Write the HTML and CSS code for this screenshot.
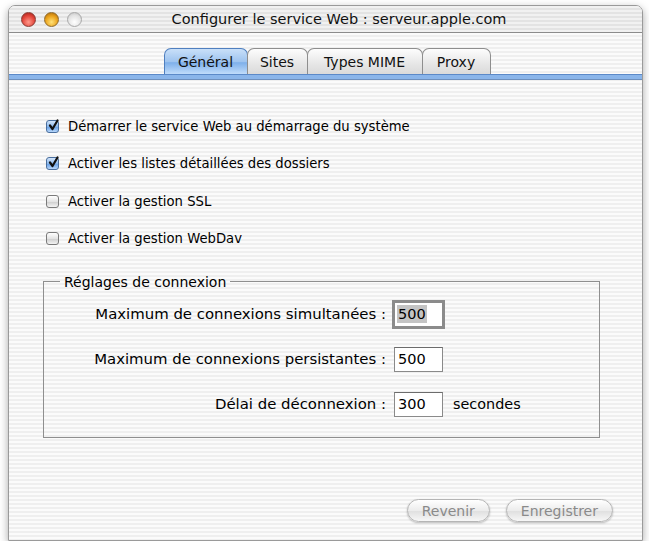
FILE: index.html
```html
<!DOCTYPE html>
<html lang="fr">
<head>
    <meta charset="UTF-8">
    <meta name="viewport" content="width=device-width, initial-scale=1.0">
    <title>Configurer le service Web</title>
    <link rel="stylesheet" href="styles.css">
</head>
<body>
    <div class="window">
        <div class="titlebar">
            <div class="lights">
                <span class="light red"></span>
                <span class="light yellow"></span>
                <span class="light off"></span>
            </div>
            <div class="title">Configurer le service Web : serveur.apple.com</div>
        </div>

        <div class="content">
            <div class="tabs">
                <span class="tab tab-general active">Général</span>
                <span class="tab tab-sites">Sites</span>
                <span class="tab tab-mime">Types MIME</span>
                <span class="tab tab-proxy">Proxy</span>
            </div>
            <div class="tab-band"></div>

            <div class="options">
                <label class="option">
                    <span class="check checked">
                        <svg width="13" height="13" viewBox="0 0 13 13"><path d="M3 6.5 L5.5 10 L10.5 1.5" fill="none" stroke="#111" stroke-width="2.2" stroke-linecap="round" stroke-linejoin="round"/></svg>
                    </span>
                    Démarrer le service Web au démarrage du système
                </label>
                <label class="option">
                    <span class="check checked">
                        <svg width="13" height="13" viewBox="0 0 13 13"><path d="M3 6.5 L5.5 10 L10.5 1.5" fill="none" stroke="#111" stroke-width="2.2" stroke-linecap="round" stroke-linejoin="round"/></svg>
                    </span>
                    Activer les listes détaillées des dossiers
                </label>
                <label class="option">
                    <span class="check"></span>
                    Activer la gestion SSL
                </label>
                <label class="option">
                    <span class="check"></span>
                    Activer la gestion WebDav
                </label>
            </div>

            <fieldset class="group">
                <legend>Réglages de connexion</legend>
                <div class="fields">
                    <span class="field-label">Maximum de connexions simultanées :</span>
                    <span class="field focused"><span class="selected">500</span></span>
                    <span></span>

                    <span class="field-label">Maximum de connexions persistantes :</span>
                    <span class="field">500</span>
                    <span></span>

                    <span class="field-label">Délai de déconnexion :</span>
                    <span class="field">300</span>
                    <span class="unit">secondes</span>
                </div>
            </fieldset>

            <div class="buttons">
                <button class="btn" disabled>Revenir</button>
                <button class="btn" disabled>Enregistrer</button>
            </div>
        </div>
    </div>
</body>
</html>
```

FILE: styles.css
```css
body {
    margin: 0;
    background: #ffffff;
    font-family: "DejaVu Sans", Verdana, sans-serif;
    font-size: 13px;
    color: #000;
}
.window {
    margin: 5px 0 0 8px;
    width: 635px;
    height: 536px;
    display: flex;
    flex-direction: column;
    border: 1px solid #9a9a9a;
    border-radius: 7px 7px 0 0;
    box-shadow: 0 3px 8px rgba(0, 0, 0, 0.35);
    box-sizing: border-box;
    overflow: hidden;
}
.titlebar {
    height: 26px;
    display: flex;
    align-items: center;
    padding-left: 12px;
    border-bottom: 1px solid #8c8c8c;
    background: repeating-linear-gradient(to bottom, #f1f1f1 0 2px, #e3e3e3 2px 4px);
    flex-shrink: 0;
}
.lights {
    display: flex;
    gap: 8px;
}
.light {
    width: 15px;
    height: 15px;
    border-radius: 50%;
    box-sizing: border-box;
}
.light.red {
    background: radial-gradient(circle at 50% 70%, #ff9a8c 0, #e2453a 55%, #9c1d16 100%);
    border: 1px solid #8a3a33;
}
.light.yellow {
    background: radial-gradient(circle at 50% 70%, #ffe27a 0, #eaa21a 55%, #a4620c 100%);
    border: 1px solid #8e6a2a;
}
.light.off {
    background: radial-gradient(circle at 50% 70%, #ffffff 0, #e2e2e2 60%, #bcbcbc 100%);
    border: 1px solid #a8a8a8;
}
.title {
    flex: 1;
    text-align: center;
    padding-right: 46px;
    font-size: 14.5px;
    color: #111;
}
.content {
    flex: 1;
    display: flex;
    flex-direction: column;
    background: repeating-linear-gradient(to bottom, #fbfbfb 0 2px, #efefef 2px 4px);
}
.tabs {
    display: flex;
    justify-content: center;
    margin-top: 15px;
    padding-left: 2px;
}
.tab {
    height: 26px;
    line-height: 27px;
    text-align: center;
    font-size: 14px;
    box-sizing: border-box;
    border: 1px solid #8e8e8e;
    border-bottom: none;
    border-radius: 7px 7px 0 0;
    background: linear-gradient(to bottom, #fdfdfd, #e6e6e6 60%, #dadada);
    color: #111;
    margin-right: -1px;
}
.tab-general { width: 84px; }
.tab-sites { width: 61px; }
.tab-mime { width: 116px; }
.tab-proxy { width: 69px; }
.tab.active {
    background: linear-gradient(to bottom, #c9e0f9, #9fc4ef 50%, #7fb0ea 55%, #c0dcfb);
    border-color: #4f7fbf;
}
.tab-band {
    height: 4px;
    background: #8ab5ea;
    border-top: 1px solid #5b89c8;
    border-bottom: 1px solid #6d8fbd;
}
.options {
    display: flex;
    flex-direction: column;
    gap: 17.5px;
    padding: 36px 0 0 37px;
}
.option {
    display: flex;
    align-items: center;
    gap: 9px;
    height: 20px;
    font-size: 13.2px;
}
.check {
    width: 13px;
    height: 13px;
    box-sizing: border-box;
    border: 1px solid #7a7a7a;
    border-radius: 3px;
    background: linear-gradient(to bottom, #ffffff, #e4e4e4 50%, #cfcfcf 55%, #f4f4f4);
    position: relative;
}
.check.checked {
    background: linear-gradient(to bottom, #d4e6fb, #8ab7ec 50%, #6aa2e6 55%, #b7d6fa);
    border-color: #4a6f9e;
}
.check svg {
    position: absolute;
    left: 0;
    top: -2px;
}
.group {
    margin: 25px 42px 0 34px;
    padding: 12px 0 20px 0;
    border: 1px solid #8f8f8f;
    min-width: 0;
}
.group legend {
    margin-left: 16px;
    padding: 0 4px;
    font-size: 14px;
}
.fields {
    display: grid;
    grid-template-columns: 342px 49px auto;
    column-gap: 8px;
    row-gap: 20px;
    align-items: center;
    font-size: 14.9px;
}
.field-label {
    text-align: right;
}
.field {
    height: 25px;
    line-height: 23px;
    box-sizing: border-box;
    border: 1px solid #8a8a8a;
    border-top-color: #6c6c6c;
    background: #fff;
    padding-left: 3px;
    font-size: 14.5px;
}
.field.focused {
    outline: 3px solid #8b8b8b;
    outline-offset: -1px;
    padding-left: 2px;
}
.selected {
    background: #c4c4c4;
    padding: 1px 1px;
}
.unit {
    padding-left: 2px;
    font-size: 14.4px;
}
.buttons {
    margin-top: auto;
    display: flex;
    justify-content: flex-end;
    gap: 16px;
    padding: 0 29px 18px 0;
}
.btn {
    font-family: "DejaVu Sans", Verdana, sans-serif;
    font-size: 14px;
    color: #8a8a8a;
    height: 23px;
    padding: 0 14px;
    border: 1px solid #b5b5b5;
    border-radius: 12px;
    background: linear-gradient(to bottom, #ffffff, #ececec 50%, #e0e0e0 55%, #f7f7f7);
    box-shadow: 0 1px 2px rgba(0, 0, 0, 0.25);
}
```
